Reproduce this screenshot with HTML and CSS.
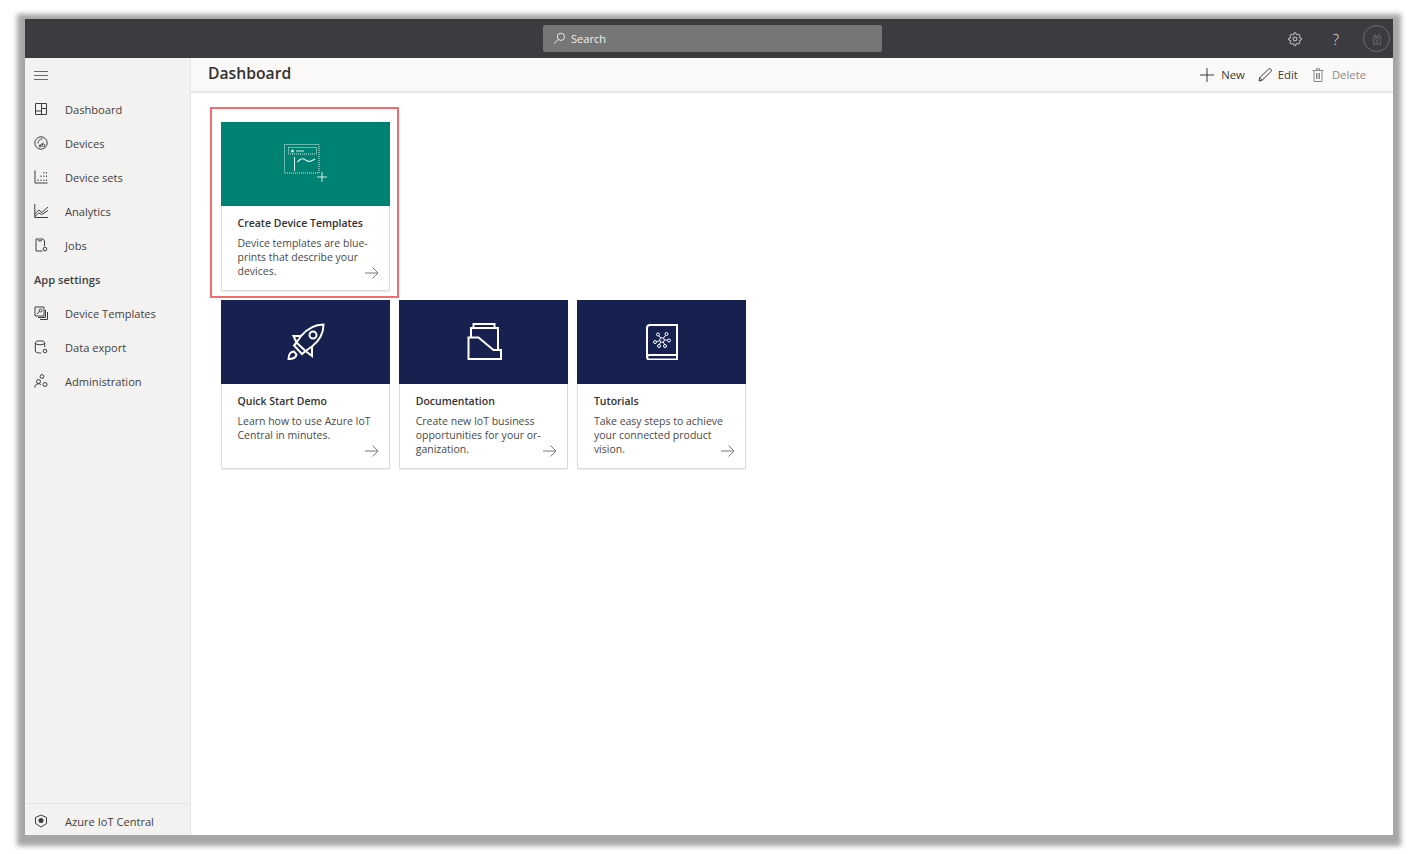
FILE: index.html
```html
<!DOCTYPE html>
<html>
<head>
  <link rel="stylesheet" href="styles.css">
</head>
<body>
  <div class="app">

    <div class="topbar">
      <div class="search">
        <svg class="search-icon" viewBox="0 0 14 14"><circle cx="8.500" cy="5.200" r="3.900"/><path d="M5.700 8 1 12.800"/></svg>
        <span>Search</span>
      </div>
      <div class="top-icons">
        <svg class="top-icon gear" viewBox="0 0 16 16"><circle cx="8" cy="8" r="2.200"/><path d="M6.900 1h2.200l.4 1.800 1.200.5 1.600-1 1.500 1.500-1 1.600.5 1.200 1.800.4v2.200l-1.800.4-.5 1.200 1 1.600-1.500 1.500-1.600-1-1.200.5-.4 1.800H6.900l-.4-1.800-1.200-.5-1.600 1-1.500-1.500 1-1.600-.5-1.200-1.800-.4V7.100l1.800-.4.5-1.200-1-1.600 1.500-1.500 1.600 1 1.200-.5z"/></svg>
        <span class="help">?</span>
        <div class="avatar">
          <svg viewBox="0 0 14 18"><path d="M2 5.500h10v11H2zM5 5.500 4 1.500M9 5.500l1-4M4.500 14h5"/><circle cx="7" cy="9.500" r="2"/></svg>
        </div>
      </div>
    </div>

    <div class="main">
      <nav class="sidebar">
        <div class="burger">
          <svg viewBox="0 0 14 9"><path d="M0 .5h14M0 4.500h14M0 8.500h14"/></svg>
        </div>

        <a class="nav-item">
          <svg class="nav-icon" viewBox="0 0 14 14"><path d="M1.500 1.500h11v11h-11zM7.500 1.500v11M7.500 6.500h5M1.500 9h6"/></svg>
          <span>Dashboard</span>
        </a>
        <a class="nav-item">
          <svg class="nav-icon" viewBox="0 0 14 14"><circle cx="7" cy="7" r="6.200"/><path d="M8.500 2.800C5.500 3 4 5 4 7.500M9 6.500 6.200 9.800"/><circle cx="9.500" cy="9.300" r="1.300"/><circle cx="6" cy="10" r="1"/></svg>
          <span>Devices</span>
        </a>
        <a class="nav-item">
          <svg class="nav-icon" viewBox="0 0 14 14"><path d="M1 .5v12.500h12.500M4 11V9.500M7 11V9.500M7 7V5.500M10 11V9.500M10 7V5.500M10 3.500V2M12.500 11V9.500M12.500 7V5.500M12.500 3.500V2"/></svg>
          <span>Device sets</span>
        </a>
        <a class="nav-item">
          <svg class="nav-icon" viewBox="0 0 14 14"><path d="M.8 0v13.500h13.700M.8 10l4-4 3 2.500L14 3M.8 12.500l4-3.500 3 1.500L14 6.500"/></svg>
          <span>Analytics</span>
        </a>
        <a class="nav-item">
          <svg class="nav-icon" viewBox="0 0 14 14"><path d="M8.500 13H2V1h7l1.500 2v5M4 2.800h4"/><circle cx="11" cy="11" r="1.800"/></svg>
          <span>Jobs</span>
        </a>

        <div class="nav-heading">App settings</div>

        <a class="nav-item">
          <svg class="nav-icon" viewBox="0 0 14 14"><path d="M1 1h9v9H1zM11.500 4v7.500H4M13.500 6v7.500H6"/><circle cx="6.500" cy="4.500" r="1.500"/><path d="M3 8l3-3"/></svg>
          <span>Device Templates</span>
        </a>
        <a class="nav-item">
          <svg class="nav-icon" viewBox="0 0 14 14"><ellipse cx="6" cy="2.800" rx="4.700" ry="2"/><path d="M1.300 2.800V11c0 1.200 2 2 4.700 2h1M10.700 2.800V7"/><circle cx="11" cy="11" r="1.800"/></svg>
          <span>Data export</span>
        </a>
        <a class="nav-item">
          <svg class="nav-icon" viewBox="0 0 14 14"><circle cx="8" cy="2.500" r="1.900"/><circle cx="4.500" cy="7.500" r="2"/><path d="M.8 13.500c0-2.500 1.500-3.700 3.700-3.700 1 0 1.800.2 2.500.8"/><circle cx="11" cy="10.500" r="2"/></svg>
          <span>Administration</span>
        </a>

        <a class="nav-item nav-footer">
          <svg class="nav-icon" viewBox="0 0 14 14"><path d="M7 1l5.500 2.500v6L7 13 1.500 9.500v-6z"/><circle class="solid" cx="7" cy="6.500" r="2.500"/></svg>
          <span>Azure IoT Central</span>
        </a>
      </nav>

      <div class="content">
        <div class="page-header">
          <h1>Dashboard</h1>
          <div class="actions">
            <a class="action">
              <svg class="plus" viewBox="0 0 14 14"><path d="M7 0v14M0 7h14"/></svg>
              <span>New</span>
            </a>
            <a class="action action-edit">
              <svg class="pencil" viewBox="0 0 14 14"><path d="M1 13l.8-3.300L10.300 1.200a1.500 1.500 0 0 1 2.500 2.500L4.300 12.200zM1.800 9.700l2.500 2.500"/></svg>
              <span>Edit</span>
            </a>
            <a class="action disabled">
              <svg class="trash" viewBox="0 0 12 14"><path d="M2 2.500h8v11H2zM.5 2.500h11M4.500 2.500V.7h3v1.800M4.500 5v6M6 5v6M7.500 5v6"/></svg>
              <span>Delete</span>
            </a>
          </div>
        </div>

        <div class="cards">
          <div class="card-row">
            <div class="card highlighted">
              <div class="card-top green">
                <svg class="art-template" viewBox="0 0 44 40">
                  <path class="dotted" d="M.5.500H35V29H.5zM4.500 3.500h28V10h-28z"/>
                  <circle class="solid" cx="8.500" cy="7" r="1.500"/>
                  <path d="M12 7h8M10.500 13v14M33 33h10M38 28v10"/>
                  <path class="wave" d="M13.500 18c3-4 5-4 8-2s5 2 9.500-1"/>
                </svg>
              </div>
              <div class="card-body">
                <h3>Create Device Templates</h3>
                <p>Device templates are blue-<br>prints that describe your<br>devices.</p>
                <svg class="arrow" viewBox="0 0 14 12"><path d="M0 6h13M7.500.5 13 6l-5.500 5.500"/></svg>
              </div>
            </div>
          </div>

          <div class="card-row">
            <div class="card">
              <div class="card-top navy">
                <svg class="art-rocket" viewBox="0 0 38 38">
                  <path d="M36.500 1.500C27 1.500 20 6 14 13l-4.500 6.500 9 8.500 6.500-4.500c7-5.500 11.500-12.500 11.500-22zM14 13H6.500l3 6.500M25 23.500V33l-6.500-5M9.500 19.500 7 22.500l8 8.500 3.500-3"/>
                  <circle cx="26" cy="12" r="3.500"/>
                  <path d="M7 28.500C4 28.500 1.500 31 1.500 36c3.500 0 7.500-1 8-4.500z"/>
                </svg>
              </div>
              <div class="card-body">
                <h3>Quick Start Demo</h3>
                <p>Learn how to use Azure IoT<br>Central in minutes.</p>
                <svg class="arrow" viewBox="0 0 14 12"><path d="M0 6h13M7.500.5 13 6l-5.500 5.500"/></svg>
              </div>
            </div>

            <div class="card">
              <div class="card-top navy">
                <svg class="art-docs" viewBox="0 0 36 38">
                  <path d="M7.500 5V1h21v4M5 14V5h27v22M2.500 36V14.500h10l15 12.500H35v9z"/>
                </svg>
              </div>
              <div class="card-body">
                <h3>Documentation</h3>
                <p>Create new IoT business<br>opportunities for your or-<br>ganization.</p>
                <svg class="arrow" viewBox="0 0 14 12"><path d="M0 6h13M7.500.5 13 6l-5.500 5.500"/></svg>
              </div>
            </div>

            <div class="card">
              <div class="card-top navy">
                <svg class="art-book" viewBox="0 0 34 36">
                  <path d="M32 1v30H4.500A2.500 2.500 0 0 0 2 33.500V4a3 3 0 0 1 3-3zM2 33a2.500 2.500 0 0 0 2.500 2.500H32V31"/>
                  <g class="thin">
                    <circle cx="17" cy="16" r="2.300"/>
                    <circle cx="13" cy="10.500" r="1.500"/>
                    <circle cx="21.500" cy="10" r="1.500"/>
                    <circle cx="10" cy="18" r="1.500"/>
                    <circle cx="24" cy="16.500" r="1.500"/>
                    <circle cx="14" cy="22" r="1.500"/>
                    <circle cx="20" cy="22" r="1.500"/>
                    <path d="M14 12l2 2.200M20.700 11.300 18.500 14M11.500 17.500l3.200-.8M19.300 16h3.200M15.500 18l-1 2.700M18.300 18l1.200 2.700"/>
                  </g>
                </svg>
              </div>
              <div class="card-body">
                <h3>Tutorials</h3>
                <p>Take easy steps to achieve<br>your connected product<br>vision.</p>
                <svg class="arrow" viewBox="0 0 14 12"><path d="M0 6h13M7.500.5 13 6l-5.500 5.500"/></svg>
              </div>
            </div>
          </div>
        </div>
      </div>
    </div>

  </div>
</body>
</html>
```

FILE: styles.css
```css
* {
  box-sizing: border-box;
}
html, body {
  height: 100%;
}
body {
  margin: 0;
  padding: 19px 25px;
  background-color: #fff;
  font-family: "Open Sans", "Liberation Sans", sans-serif;
  font-size: 11.100px;
  color: #3b3a39;
  overflow: hidden;
}
svg {
  fill: none;
  stroke: currentColor;
  stroke-width: 1;
  display: block;
}
svg .solid {
  fill: currentColor;
  stroke: none;
}
.app {
  height: 816px;
  display: flex;
  flex-direction: column;
  background-color: #fff;
  box-shadow: 0 3px 5px 8px #a6a6a6;
}

/* top bar */
.topbar {
  height: 39px;
  flex: none;
  background-color: #3c3b40;
  position: relative;
  display: flex;
  align-items: center;
  justify-content: center;
}
.search {
  width: 339px;
  height: 27px;
  margin-left: 7px;
  padding-left: 10px;
  display: flex;
  align-items: center;
  gap: 5px;
  background-color: #767676;
  border-radius: 2px;
  color: #f0f0f0;
}
.search-icon {
  width: 13px;
  height: 13px;
}
.top-icons {
  position: absolute;
  right: 3px;
  top: 0;
  height: 39px;
  display: flex;
  align-items: center;
  color: #e4e4e4;
}
.top-icon.gear {
  width: 14px;
  height: 14px;
}
.help {
  margin-left: 28px;
  width: 12px;
  font-size: 15px;
  font-weight: 300;
  text-align: center;
}
.avatar {
  margin-left: 21px;
  width: 27px;
  height: 27px;
  border: 1px solid #6d6c70;
  border-radius: 50%;
  display: flex;
  align-items: center;
  justify-content: center;
  color: #77767a;
}
.avatar svg {
  width: 10px;
  height: 14px;
}

/* sidebar */
.main {
  flex: 1;
  display: flex;
  min-height: 0;
}
.sidebar {
  width: 166px;
  flex: none;
  background-color: #f3f2f1;
  border-right: 1px solid #e6e5e4;
  display: flex;
  flex-direction: column;
  color: #3f3e3d;
}
.burger {
  height: 34px;
  padding-left: 9px;
  display: flex;
  align-items: center;
}
.burger svg {
  width: 14px;
  height: 9px;
  color: #6a6968;
}
.nav-item {
  height: 34px;
  flex: none;
  padding-left: 9px;
  display: flex;
  align-items: center;
  gap: 17px;
}
.nav-icon {
  width: 14px;
  height: 14px;
  flex: none;
}
.nav-heading {
  height: 34px;
  padding-left: 9px;
  display: flex;
  align-items: center;
  font-weight: 600;
}
.nav-footer {
  margin-top: auto;
  height: 32px;
  border-top: 1px solid #e6e5e4;
  padding-top: 3px;
}

/* page header */
.content {
  flex: 1;
  min-width: 0;
}
.page-header {
  height: 35px;
  padding: 0 27px 0 17px;
  display: flex;
  align-items: center;
  justify-content: space-between;
  background-color: #faf9f8;
  border-bottom: 2px solid #e8e7e6;
}
.page-header h1 {
  margin: 0 0 3px;
  font-size: 15.700px;
  font-weight: 600;
  color: #323130;
}
.actions {
  display: flex;
  align-items: center;
  gap: 13px;
}
.action {
  display: flex;
  align-items: center;
  gap: 7px;
  font-size: 11.300px;
}
.action-edit {
  gap: 6px;
}
.action.disabled {
  color: #8a8886;
  gap: 8px;
  margin-left: 1px;
}
.plus {
  width: 14px;
  height: 14px;
}
.pencil {
  width: 14px;
  height: 14px;
}
.trash {
  width: 12px;
  height: 14px;
}

/* cards */
.cards {
  padding: 29px 0 0 30px;
  display: flex;
  flex-direction: column;
  gap: 9px;
}
.card-row {
  display: flex;
  gap: 9.200px;
}
.card {
  width: 169px;
  height: 169px;
  position: relative;
  background-color: #fff;
  border: 1px solid #dcdbda;
  border-top: none;
  border-radius: 0 0 2px 2px;
  box-shadow: 0 1px 1px rgba(0, 0, 0, 0.08);
}
.highlighted::after {
  content: "";
  position: absolute;
  top: -15px;
  left: -12px;
  right: -10px;
  bottom: -8px;
  border: 2px solid #f26d70;
}
.card-top {
  height: 84px;
  margin: 0 -1px;
  display: flex;
  align-items: center;
  justify-content: center;
  color: #fff;
}
.green {
  background-color: #008272;
}
.navy {
  background-color: #16214f;
}
.art-template {
  width: 44px;
  height: 40px;
  color: #d7ece8;
}
.art-template .dotted {
  stroke-dasharray: 1 1;
}
.art-template .wave {
  stroke-width: 1.300;
}
.art-rocket {
  width: 38px;
  height: 38px;
  stroke-width: 2;
}
.art-docs {
  width: 36px;
  height: 38px;
  stroke-width: 2;
}
.art-book {
  width: 34px;
  height: 36px;
  stroke-width: 2;
}
.art-book .thin {
  stroke-width: 1;
}
.card-body {
  position: relative;
  height: 85px;
  padding: 9px 10px 0 15.500px;
}
.card-body h3 {
  margin: 0 0 5px;
  font-size: 10.500px;
  line-height: 16px;
  font-weight: 600;
  color: #323130;
}
.card-body p {
  margin: 0;
  font-size: 10.500px;
  line-height: 14px;
  color: #4a4948;
}
.arrow {
  position: absolute;
  right: 10px;
  bottom: 12px;
  width: 14px;
  height: 12px;
  color: #7a7978;
}
```
